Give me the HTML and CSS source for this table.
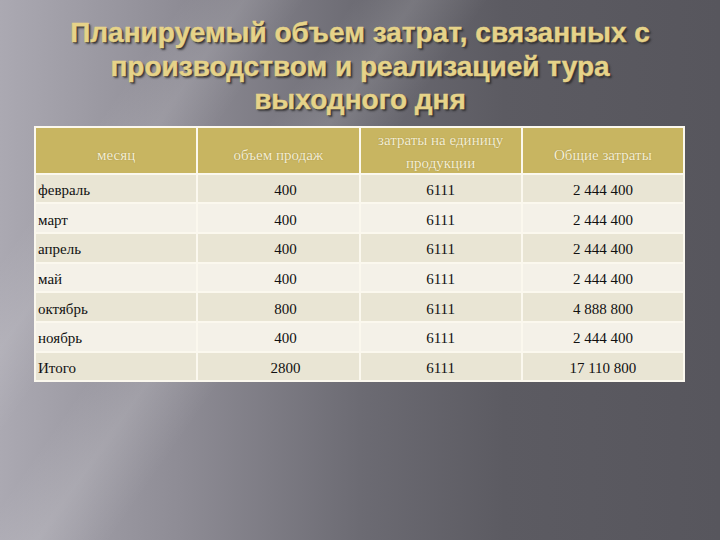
FILE: index.html
```
<!DOCTYPE html>
<html lang="ru">
<head>
<meta charset="utf-8">
<link rel="stylesheet" href="styles.css">
</head>
<body>
<div class="slide">
  <h1 class="title">Планируемый объем затрат, связанных с<br>производством и реализацией тура<br>выходного дня</h1>
  <table class="grid">
    <thead>
      <tr>
        <th><div class="hd">месяц</div></th>
        <th><div class="hd">объем продаж</div></th>
        <th><div class="hd two">затраты на единицу<br>продукции</div></th>
        <th><div class="hd">Общие затраты</div></th>
      </tr>
    </thead>
    <tbody>
      <tr class="odd"><td class="m">февраль</td><td class="v">400</td><td>6111</td><td>2 444 400</td></tr>
      <tr class="even"><td class="m">март</td><td class="v">400</td><td>6111</td><td>2 444 400</td></tr>
      <tr class="odd"><td class="m">апрель</td><td class="v">400</td><td>6111</td><td>2 444 400</td></tr>
      <tr class="even"><td class="m">май</td><td class="v">400</td><td>6111</td><td>2 444 400</td></tr>
      <tr class="odd"><td class="m">октябрь</td><td class="v">800</td><td>6111</td><td>4 888 800</td></tr>
      <tr class="even"><td class="m">ноябрь</td><td class="v">400</td><td>6111</td><td>2 444 400</td></tr>
      <tr class="odd"><td class="m">Итого</td><td class="v">2800</td><td>6111</td><td>17 110 800</td></tr>
    </tbody>
  </table>
</div>
</body>
</html>
```
FILE: styles.css
```
html, body {
  margin: 0;
  padding: 0;
}
body {
  width: 720px;
  height: 540px;
  overflow: hidden;
}
.slide {
  width: 720px;
  height: 540px;
  box-sizing: border-box;
  padding-top: 16px;
  background:
    linear-gradient(125deg, rgba(255,255,255,0) 0px, rgba(255,255,255,0) 150px, rgba(255,255,255,0.10) 200px, rgba(255,255,255,0) 250px, rgba(255,255,255,0) 290px, rgba(255,255,255,0.12) 340px, rgba(255,255,255,0) 400px),
    linear-gradient(90deg, #aba9b2 0%, #8e8c95 25%, #6c6b73 50%, #5c5b62 70%, #57565d 100%);
}
.title {
  margin: 0 0 9px 0;
  text-align: center;
  font-family: "Liberation Sans", Arial, sans-serif;
  font-weight: bold;
  font-size: 28px;
  line-height: 33.5px;
  color: #e6d389;
  -webkit-text-stroke: 0.4px #e6d389;
  text-shadow: 1px 1px 0 #3b3a3a, 2px 2px 2px rgba(30,30,30,0.7);
}
.grid {
  margin-left: 34px;
  width: 651px;
  border-collapse: collapse;
  table-layout: fixed;
  border: 2px solid #f4f1e4;
  font-family: "Liberation Serif", "Times New Roman", serif;
  font-size: 15px;
  color: #111;
}
.grid th, .grid td {
  border: 2px solid #fbf8ee;
  padding: 0 4px;
  text-align: center;
}
.grid th {
  background: #c8b561;
  color: #f6efd2;
  font-weight: normal;
  height: 45px;
  padding: 0 4px;
  vertical-align: top;
  text-shadow: 0 0 1px rgba(120,100,40,0.6);
}
.hd {
  height: 45px;
  box-sizing: border-box;
  padding-top: 15px;
  line-height: 24px;
}
.hd.two {
  padding-top: 1px;
  line-height: 23px;
}
.grid td {
  height: 23.7px;
  padding-top: 4px;
}
.grid td.m {
  text-align: left;
  padding-left: 2px;
}
.grid td.v {
  padding-left: 18px;
}
.odd td {
  background: #e9e5d4;
}
.even td {
  background: #f4f1e8;
}
```
